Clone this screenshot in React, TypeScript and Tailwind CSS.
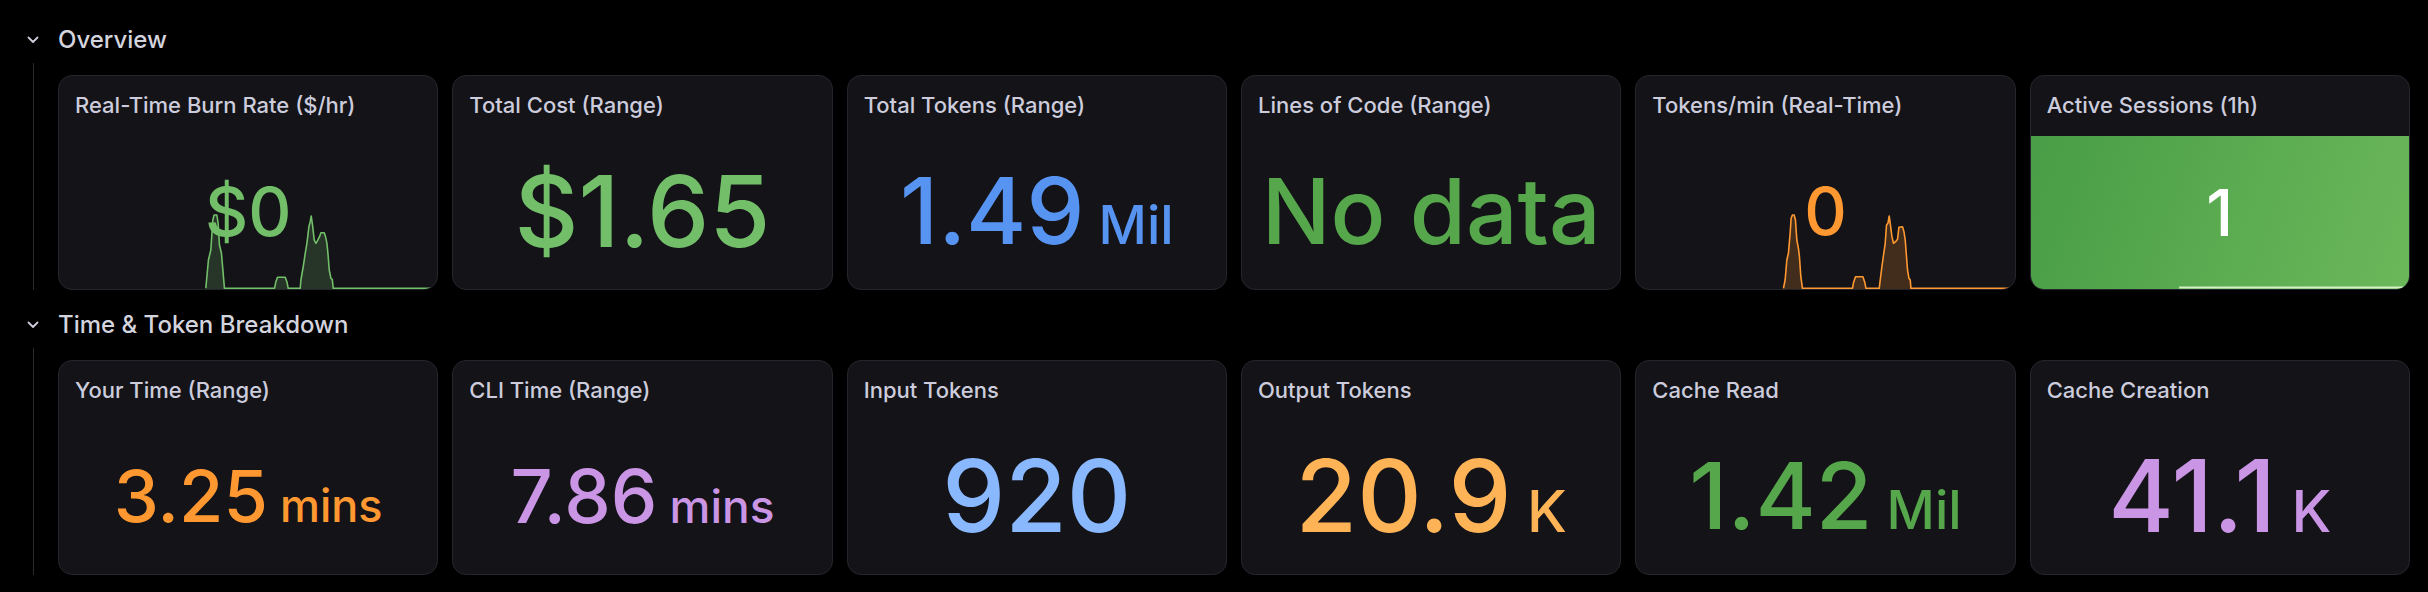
import React from "react";

type Pt = [number, number];

const burnPts: Pt[] = [
  [77, 295], [85, 210], [92, 180], [98, 90], [102, 75], [110, 75], [114, 100], [118, 165], [124, 190], [133, 295],
  [283, 295], [287, 275], [292, 262], [315, 262], [320, 275], [324, 295],
  [360, 295], [362, 270], [370, 225], [375, 190], [380, 160], [386, 110], [390, 95], [393, 78], [397, 105],
  [402, 150], [407, 160], [412, 152], [418, 140], [422, 128], [432, 128], [436, 140], [440, 160], [443, 190],
  [447, 240], [452, 265], [456, 268], [459, 295], [755, 295],
];

const tokPts: Pt[] = [
  [490, 295], [495, 270], [500, 210], [505, 190], [510, 130], [513, 85], [517, 75], [522, 75], [526, 90],
  [530, 150], [535, 175], [538, 200], [542, 260], [547, 295], [697, 295], [700, 278], [706, 260], [728, 260],
  [734, 278], [737, 295], [777, 295], [780, 270], [785, 230], [790, 195], [795, 160], [799, 105], [803, 100],
  [807, 78], [810, 100], [815, 140], [820, 160], [826, 155], [832, 148], [836, 112], [847, 110], [851, 125],
  [855, 150], [858, 190], [862, 240], [866, 265], [870, 270], [872, 295], [1170, 295],
];

function Spark({ pts, xOff, color, fill }: { pts: Pt[]; xOff: number; color: string; fill: string }) {
  const conv = pts.map(([x, y]) => [xOff + x / 3, y / 3 + 1] as Pt);
  const line = conv.map(([x, y], i) => `${i === 0 ? "M" : "L"}${x.toFixed(1)} ${y.toFixed(1)}`).join(" ");
  const first = conv[0];
  const last = conv[conv.length - 1];
  const area = `${line} L${last[0].toFixed(1)} 100 L${first[0].toFixed(1)} 100 Z`;
  return (
    <svg
      className="absolute left-0 bottom-0 w-full h-[100px]"
      viewBox="0 0 378 100"
      preserveAspectRatio="none"
    >
      <path d={area} fill={fill} />
      <path d={line} fill="none" stroke={color} strokeWidth={1.6} strokeLinejoin="round" />
    </svg>
  );
}

function Chevron() {
  return (
    <svg width="12" height="8" viewBox="0 0 12 8" className="shrink-0">
      <path d="M1.5 1.5 L6 6 L10.5 1.5" fill="none" stroke="#ccccdc" strokeWidth="1.8" strokeLinecap="round" strokeLinejoin="round" />
    </svg>
  );
}

type CardProps = {
  title: string;
  value: string;
  unit?: string;
  size: number;
  unitSize?: number;
  color: string;
  spark?: React.ReactNode;
};

function Value({ value, unit, size, unitSize, color }: { value: string; unit?: string; size: number; unitSize?: number; color: string }) {
  return (
    <div className="relative z-10 leading-none font-medium whitespace-nowrap" style={{ color }}>
      <span style={{ fontSize: size }}>{value}</span>
      {unit ? <span style={{ fontSize: unitSize }}>{" " + unit}</span> : null}
    </div>
  );
}

function Card({ title, value, unit, size, unitSize, color, spark }: CardProps) {
  return (
    <div className="relative h-[215px] rounded-[14px] border border-[#25262d] bg-[#131318] overflow-hidden flex flex-col">
      <div className="h-[57px] shrink-0 pl-[16px] pt-[19px]">
        <div className="text-[22px] leading-[20px] font-medium text-[#ccccdc] whitespace-nowrap">{title}</div>
      </div>
      <div className="flex-1 flex items-center justify-center">
        <Value value={value} unit={unit} size={size} unitSize={unitSize} color={color} />
      </div>
      {spark}
    </div>
  );
}

function SessionsCard() {
  return (
    <div className="relative h-[215px] rounded-[14px] border border-[#25262d] bg-[#131318] overflow-hidden flex flex-col">
      <div className="h-[60px] shrink-0 pl-[16px] pt-[19px]">
        <div className="text-[22px] leading-[20px] font-medium text-[#ccccdc] whitespace-nowrap">Active Sessions (1h)</div>
      </div>
      <div className="relative flex-1 flex items-center justify-center bg-[linear-gradient(110deg,#489d46_0%,#58a94f_45%,#6bb85a_100%)]">
        <Value value="1" size={65} color="#ffffff" />
        <svg className="absolute left-0 bottom-0 w-full h-[6px]" viewBox="0 0 378 6" preserveAspectRatio="none">
          <path d="M148 4.5 L372 4.5" stroke="#d2f2c6" strokeWidth="2" fill="none" />
        </svg>
      </div>
    </div>
  );
}

function Section({ title, children, className = "" }: { title: string; children: React.ReactNode; className?: string }) {
  return (
    <section className={className}>
      <div className="h-[46px] flex items-center pl-[27px] gap-[19px]">
        <Chevron />
        <div className="text-[24px] leading-none font-medium text-[#d4d4de] whitespace-nowrap">{title}</div>
      </div>
      <div className="ml-[33px] border-l border-[#2a2a30] pl-[24px] pt-[12px] pr-[18px]">
        <div className="grid grid-cols-6 gap-[14px]">{children}</div>
      </div>
    </section>
  );
}

export default function App() {
  return (
    <div className="w-[2428px] h-[592px] bg-black pt-[17px] font-['Inter','Noto_Sans',sans-serif] overflow-hidden">
      <Section title="Overview">
        <Card
          title="Real-Time Burn Rate ($/hr)"
          value="$0"
          size={67}
          color="#73bf69"
          spark={<Spark pts={burnPts} xOff={121} color="#73bf69" fill="rgba(115,191,105,0.2)" />}
        />
        <Card title="Total Cost (Range)" value="$1.65" size={99} color="#73bf69" />
        <Card title="Total Tokens (Range)" value="1.49" unit="Mil" size={92} unitSize={53} color="#5794f2" />
        <Card title="Lines of Code (Range)" value="No data" size={91} color="#56a64b" />
        <Card
          title="Tokens/min (Real-Time)"
          value="0"
          size={66}
          color="#ff9830"
          spark={<Spark pts={tokPts} xOff={-16} color="#ff9830" fill="rgba(255,152,48,0.2)" />}
        />
        <SessionsCard />
      </Section>
      <Section title="Time & Token Breakdown" className="mt-[12px]">
        <Card title="Your Time (Range)" value="3.25" unit="mins" size={72} unitSize={45} color="#ff9830" />
        <Card title="CLI Time (Range)" value="7.86" unit="mins" size={74} unitSize={46} color="#ca95e5" />
        <Card title="Input Tokens" value="920" size={100} color="#8ab8ff" />
        <Card title="Output Tokens" value="20.9" unit="K" size={100} unitSize={58} color="#ffb357" />
        <Card title="Cache Read" value="1.42" unit="Mil" size={92} unitSize={53} color="#56a64b" />
        <Card title="Cache Creation" value="41.1" unit="K" size={100} unitSize={58} color="#ca95e5" />
      </Section>
    </div>
  );
}
